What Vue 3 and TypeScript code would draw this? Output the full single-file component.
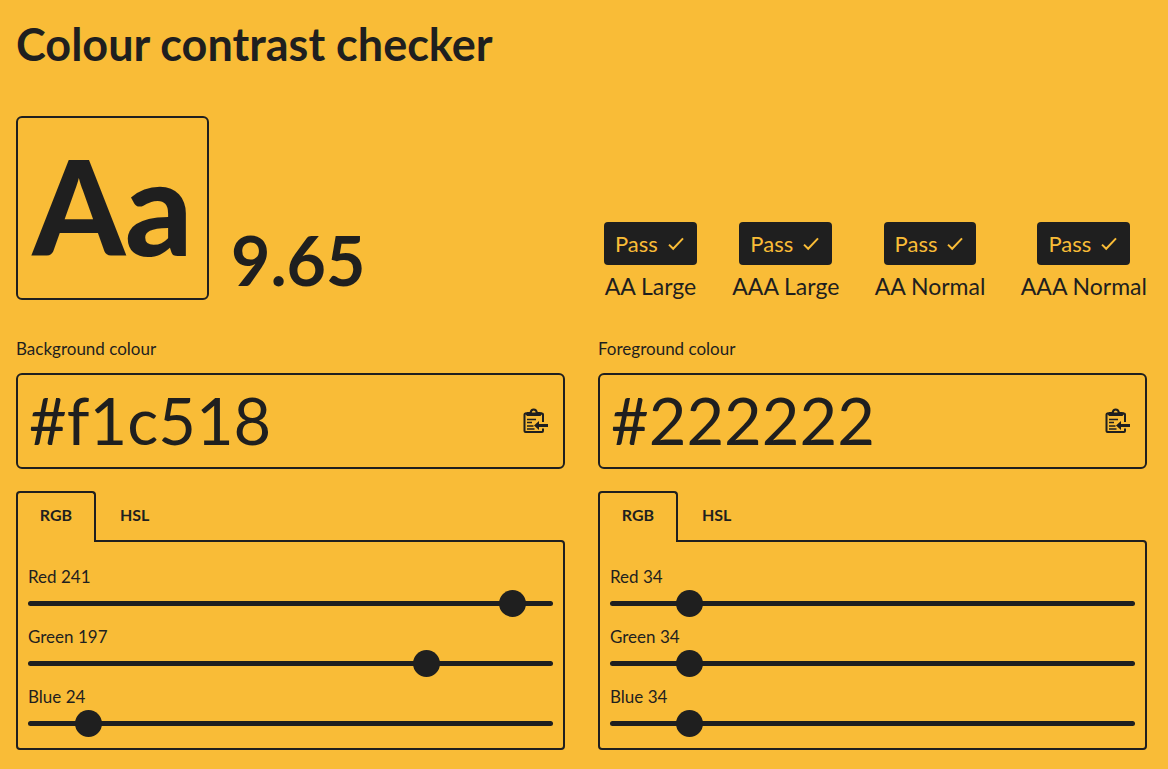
<script setup lang="ts">
import { reactive } from 'vue'

interface Channel {
  name: string
  value: number
}

interface ColourField {
  id: string
  label: string
  hex: string
  channels: Channel[]
}

const ratio = '9.65'
const levels: string[] = ['AA Large', 'AAA Large', 'AA Normal', 'AAA Normal']

const fields = reactive<ColourField[]>([
  {
    id: 'background',
    label: 'Background colour',
    hex: '#f1c518',
    channels: [
      { name: 'Red', value: 241 },
      { name: 'Green', value: 197 },
      { name: 'Blue', value: 24 },
    ],
  },
  {
    id: 'foreground',
    label: 'Foreground colour',
    hex: '#222222',
    channels: [
      { name: 'Red', value: 34 },
      { name: 'Green', value: 34 },
      { name: 'Blue', value: 34 },
    ],
  },
])
</script>

<template>
  <main class="page">
    <h1 class="title">Colour contrast checker</h1>

    <section class="columns summary">
      <div class="preview">
        <div class="sample">Aa</div>
        <div class="ratio">{{ ratio }}</div>
      </div>
      <ul class="levels">
        <li v-for="level in levels" :key="level" class="level">
          <span class="badge">
            Pass
            <svg class="tick" viewBox="0 0 16 16" aria-hidden="true">
              <path d="M1 8.6 5.2 12.8 15 2.4" />
            </svg>
          </span>
          <span class="level-name">{{ level }}</span>
        </li>
      </ul>
    </section>

    <section class="columns">
      <div v-for="field in fields" :key="field.id" class="field">
        <label class="caption" :for="field.id">{{ field.label }}</label>
        <div class="hex-box">
          <input :id="field.id" v-model="field.hex" class="hex" type="text" spellcheck="false" />
          <button class="paste" type="button" aria-label="Paste">
            <svg class="clipboard" viewBox="0 0 26 26" aria-hidden="true">
              <path class="line" d="M20 14V6.500Q20 5.500 19 5.500H2.500Q1.500 5.500 1.500 6.500V23Q1.500 24 2.500 24H19Q20 24 20 23V20.500" />
              <path class="line" d="M4 5H7.500Q8 1.500 10.700 1.500T14 5H17.500" />
              <path class="solid" d="M2.500 4.500H9V5.500H12.500V4.500H19V6L17.500 8H4L2.500 6Z" />
              <path class="thin" d="M4 11.500H13M4 14.500H9M4 18H10.500M4 21H11.500" />
              <path class="solid" d="M11 17.500 16 13V16H25V19H16V22Z" />
            </svg>
          </button>
        </div>

        <div class="tabs" role="tablist">
          <button class="tab selected" type="button" role="tab" aria-selected="true">RGB</button>
          <button class="tab" type="button" role="tab" aria-selected="false">HSL</button>
        </div>
        <div class="panel" role="tabpanel">
          <div v-for="channel in field.channels" :key="channel.name" class="channel">
            <label class="caption" :for="field.id + channel.name">{{ channel.name }} {{ channel.value }}</label>
            <input
              :id="field.id + channel.name"
              v-model.number="channel.value"
              class="slider"
              type="range"
              min="0"
              max="255"
            />
          </div>
        </div>
      </div>
    </section>
  </main>
</template>

<style>
body {
  margin: 0;
  background: #f9bc37;
}
</style>

<style scoped>
.page {
  --ink: #1f1f1f;
  --paper: #f9bc37;
  box-sizing: border-box;
  padding: 16px 21px 19px 16px;
  color: var(--ink);
  background: var(--paper);
  font-family: Lato, 'Open Sans', sans-serif;
  font-size: 17px;
  line-height: 20px;
}

.title {
  margin: 0 0 44px;
  font-size: 45px;
  line-height: 56px;
  font-weight: 700;
}

.columns {
  display: grid;
  grid-template-columns: minmax(0, 1fr) minmax(0, 1fr);
  column-gap: 33px;
}

.summary {
  align-items: end;
  margin-bottom: 39px;
}

.preview {
  display: flex;
  align-items: flex-end;
  gap: 22px;
}

.sample {
  box-sizing: border-box;
  display: flex;
  justify-content: center;
  min-width: 193px;
  padding-bottom: 6px;
  border: 2px solid var(--ink);
  border-radius: 6px;
  font-size: 132px;
  line-height: 174px;
  font-weight: 900;
}

.ratio {
  font-size: 68px;
  line-height: 80px;
  font-weight: 700;
}

.levels {
  display: flex;
  justify-content: space-between;
  margin: 0;
  padding: 0 0 0 6px;
  list-style: none;
}

.level {
  display: flex;
  flex-direction: column;
  align-items: center;
  gap: 8px;
  line-height: 27px;
}

.level-name {
  font-size: 23px;
  line-height: 27px;
}

.badge {
  display: flex;
  align-items: center;
  gap: 10px;
  padding: 8px 13px 8px 11px;
  border-radius: 4px;
  color: var(--paper);
  background: var(--ink);
  font-size: 22px;
}

.tick {
  width: 16px;
  height: 16px;
  fill: none;
  stroke: currentColor;
  stroke-width: 2;
}

.caption {
  display: block;
}

.hex-box {
  display: flex;
  align-items: center;
  margin-top: 14px;
  padding: 0 14px 0 11px;
  border: 2px solid var(--ink);
  border-radius: 6px;
}

.hex {
  flex: 1;
  box-sizing: border-box;
  min-width: 0;
  height: 92px;
  padding: 0 0 2px;
  border: 0;
  outline: 0;
  color: inherit;
  background: transparent;
  font: inherit;
  font-size: 65px;
}

.paste {
  display: flex;
  padding: 0;
  border: 0;
  color: inherit;
  background: transparent;
}

.clipboard {
  width: 26px;
  height: 26px;
}

.line {
  fill: none;
  stroke: currentColor;
  stroke-width: 2;
}

.thin {
  fill: none;
  stroke: currentColor;
  stroke-width: 1.5;
}

.solid {
  fill: currentColor;
}

.tabs {
  position: relative;
  display: flex;
  margin-top: 22px;
}

.tab {
  height: 51px;
  padding: 0 24px 4px;
  border: 0;
  color: inherit;
  background: transparent;
  font: inherit;
  font-size: 16px;
  font-weight: 700;
}

.selected {
  min-width: 80px;
  padding: 0 20px 6px;
  border: 2px solid var(--ink);
  border-bottom: 0;
  border-radius: 4px 4px 0 0;
  background: var(--paper);
}

.panel {
  display: grid;
  gap: 8px;
  margin-top: -2px;
  padding: 25px 10px 9px;
  border: 2px solid var(--ink);
  border-radius: 0 4px 4px 4px;
}

.slider {
  display: block;
  width: 100%;
  height: 32px;
  margin: 0;
  appearance: none;
  background: transparent;
}

.slider::-webkit-slider-runnable-track {
  height: 5px;
  border-radius: 3px;
  background: var(--ink);
}

.slider::-webkit-slider-thumb {
  appearance: none;
  width: 27px;
  height: 27px;
  margin-top: -11px;
  border-radius: 50%;
  background: var(--ink);
}
</style>
